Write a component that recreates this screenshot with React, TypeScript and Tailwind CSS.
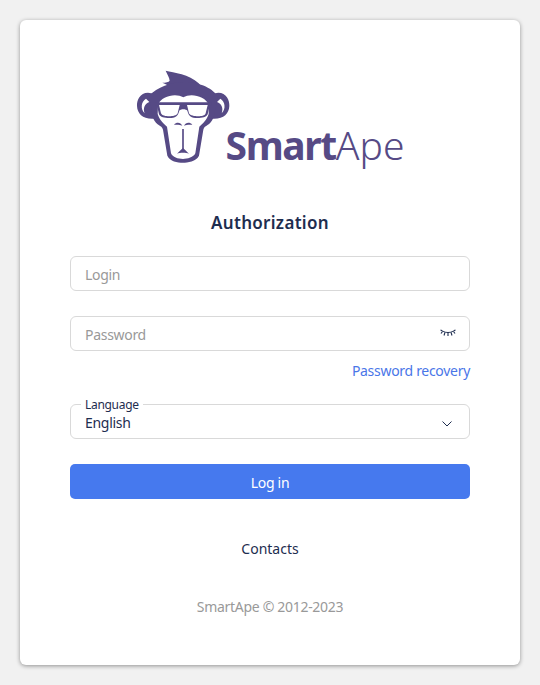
const Logo = () => (
  <div className="flex items-end justify-center h-[110px] pr-[2px]">
    <svg width="100" height="100" viewBox="40 25 300 300" className="mb-[1px] -mr-[8px]">
      <path fill="#564a85" d="M82 96C58 96 48 118 49 136C50 160 68 177 102 174L106 100Z" />
      <path fill="#564a85" d="M293 96C317 96 327 118 326 136C325 160 307 177 273 174L269 100Z" />
      <path fill="#fff" d="M76 114C62 122 58 144 72 158C66 144 72 128 86 124Z" />
      <path fill="#fff" d="M299 114C313 122 317 144 303 158C309 144 303 128 289 124Z" />
      <path fill="#564a85" d="M135 30C160 36 205 40 234 68C246 80 252 90 256 104L150 90C150 80 146 74 125 66C136 66 144 64 147 60C146 50 140 42 135 30Z" />
      <path fill="#564a85" d="M85 105C110 80 150 64 190 64C240 64 280 85 292 110L278 172C268 196 252 192 248 207L235 285C227 302 200 306 187 306C170 306 148 302 140 285L127 207C123 192 107 196 97 172Z" />
      <path fill="#fff" d="M112 132C122 106 165 96 188 110C210 96 254 106 264 132L264 160C258 180 246 188 236 198L224 278C219 290 200 295 187 295C172 295 156 290 151 278L139 198C129 188 117 180 111 160Z" />
      <path fill="#564a85" d="M103 125H272V135H267L261 161C257 170 245 172 230 172C212 172 204 166 200 150C197 144 179 144 176 150C172 166 164 172 146 172C131 172 119 170 115 161L109 135H103Z" />
      <path fill="#fff" d="M115 133H177L171 158C168 165 156 167 146 167C134 167 124 165 121 158Z" />
      <path fill="#fff" d="M199 133H261L255 158C253 165 244 167 232 167C222 167 208 165 205 158Z" />
      <path fill="#564a85" d="M160 192C168 183 180 185 185 195C176 191 170 192 160 192ZM215 192C207 183 195 185 190 195C199 191 205 192 215 192Z" />
      <path fill="none" stroke="#564a85" strokeWidth="5" d="M187 205V266" />
      <path fill="#564a85" d="M169 279C177 273 181 266 187 262C193 266 197 273 205 279C196 275 178 275 169 279Z" />
    </svg>
    <div className="font-['Noto_Sans',sans-serif] text-[39px] leading-[50px] text-[#564a85]">
      <span className="font-bold tracking-[-1.4px]">Smart</span>
      <span className="font-light tracking-[0px]">Ape</span>
    </div>
  </div>
);

const EyeOff = () => (
  <svg width="16" height="10" viewBox="0 0 16 10" fill="none" stroke="#1e2d4f" strokeWidth="1.1">
    <path d="M0.5 1C3 2.2 4 3.5 8 3.5C12 3.5 13 2.2 15.5 1" />
    <path d="M2.5 2.5L1 4.5M5 3.4L4 6.5M8 3.6V7M11 3.4L12 6.5M13.5 2.5L15 4.5" />
  </svg>
);

const Chevron = () => (
  <svg width="10" height="6" viewBox="0 0 10 6" fill="none" stroke="#1e2d4f" strokeWidth="1">
    <path d="M0.5 0.5L5 5L9.5 0.5" />
  </svg>
);

export default function App() {
  return (
    <div className="min-h-[685px] bg-[#f1f1f1] p-5 font-['Noto_Sans',sans-serif] text-sm tracking-[-0.3px] text-[#1e2d4f]">
      <div className="flex h-[645px] flex-col rounded-md bg-white px-[50px] pt-10 shadow-[0_1px_4px_rgba(0,0,0,0.4)]">
        <Logo />
        <h1 className="mt-[41px] text-center text-[17px] leading-6 font-semibold tracking-[0.3px]">Authorization</h1>

        <input
          placeholder="Login"
          className="mt-[21px] h-[35px] w-full rounded-md border border-[#d9d9d9] px-[14px] pt-[2px] outline-none placeholder:text-[#999]"
        />

        <div className="relative mt-[25px]">
          <input
            placeholder="Password"
            className="h-[35px] w-full rounded-md border border-[#d9d9d9] px-[14px] pt-[2px] outline-none placeholder:text-[#999]"
          />
          <div className="absolute top-[13px] right-[14px]">
            <EyeOff />
          </div>
        </div>

        <a className="mt-[10px] self-end leading-5 text-[#4a76e8]">Password recovery</a>

        <div className="relative mt-[23px] flex h-[35px] items-end justify-between rounded-md border border-[#d9d9d9] px-[14px] pb-[5px]">
          <span className="absolute -top-[7px] left-[10px] bg-white px-1 text-xs leading-[14px]">Language</span>
          <span className="leading-5">English</span>
          <div className="mr-[3px] mb-[6px]">
            <Chevron />
          </div>
        </div>

        <button className="mt-[25px] h-[35px] w-full rounded-[5px] bg-[#4679ee] pt-[2px] text-white">Log in</button>

        <div className="mt-10 text-center leading-5 tracking-normal">Contacts</div>
        <div className="mt-[38px] text-center leading-5 text-[#999]">SmartApe © 2012-2023</div>
      </div>
    </div>
  );
}
